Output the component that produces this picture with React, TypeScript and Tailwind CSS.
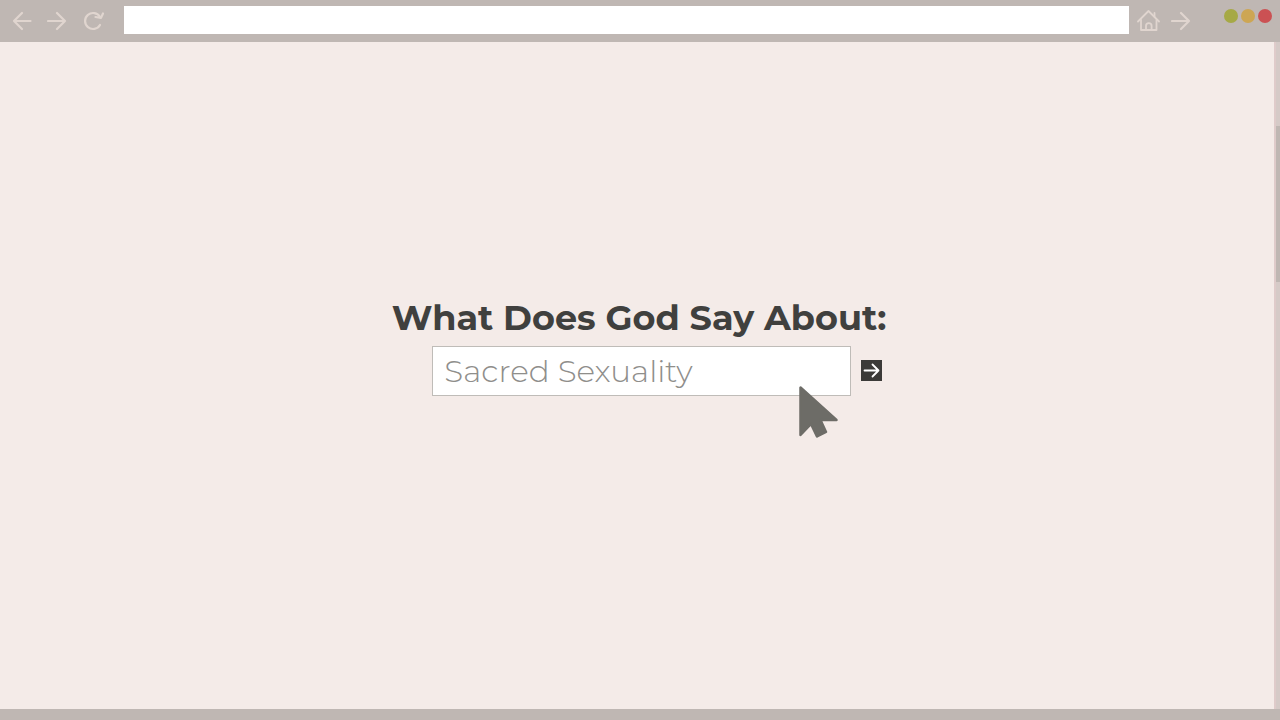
import type { FormEvent } from 'react';
import { useState } from 'react';

const iconProps = {
  fill: 'none',
  stroke: 'currentColor',
  strokeWidth: 2.2,
  strokeLinecap: 'round',
  strokeLinejoin: 'round',
  'aria-hidden': true,
} as const;

function ArrowIcon({ back = false }: { back?: boolean }) {
  return (
    <svg width="20" height="20" viewBox="0 0 20 20" {...iconProps}>
      {back ? <path d="M18.500 10H2M10 2L2 10l8 8" /> : <path d="M1 10h17M10 2l8 8-8 8" />}
    </svg>
  );
}

function ReloadIcon() {
  return (
    <svg width="22" height="20" viewBox="0 0 22 20" {...iconProps}>
      <path d="M18 14A8 8 0 1 1 18 6" />
      <path d="M13.500 6l5.500 0.800L21 2.500" />
    </svg>
  );
}

function HomeIcon() {
  return (
    <svg width="24" height="22" viewBox="0 0 24 22" {...iconProps} strokeWidth={1.8}>
      <path d="M1 11.500L11.500 1l10.500 10.500" />
      <path d="M4 10v10h15.500V10M17.500 6.500V3" />
      <path d="M9 20v-4a2.800 2.800 0 0 1 5.600 0v4" />
    </svg>
  );
}

function Pointer() {
  return (
    <svg
      width="42"
      height="54"
      viewBox="0 0 42 54"
      className="pointer-events-none absolute left-[366px] top-10 text-[#6d6c67]"
      aria-hidden="true"
    >
      <path
        d="M2.500 1.500v47.500l10.500-11 6 12.500 9-4.500-5.500-12h16z"
        fill="currentColor"
        stroke="currentColor"
        strokeWidth="2.500"
        strokeLinejoin="round"
      />
    </svg>
  );
}

function BrowserBar() {
  const [address, setAddress] = useState('');

  return (
    <header className="flex h-[42px] items-center bg-[#bfb7b3] pr-2 text-[#e0d5cf]">
      <nav aria-label="History" className="flex w-[124px] shrink-0 items-center gap-[15px] pl-3">
        <button type="button" aria-label="Back">
          <ArrowIcon back />
        </button>
        <button type="button" aria-label="Forward">
          <ArrowIcon />
        </button>
        <button type="button" aria-label="Reload">
          <ReloadIcon />
        </button>
      </nav>
      <input
        type="text"
        aria-label="Address"
        value={address}
        onChange={(e) => setAddress(e.target.value)}
        className="mb-0.5 h-7 min-w-0 flex-1 bg-white px-3 text-base text-[#40403e] outline-none"
      />
      <div className="flex items-center gap-2.5 pl-2">
        <button type="button" aria-label="Home">
          <HomeIcon />
        </button>
        <button type="button" aria-label="Go">
          <ArrowIcon />
        </button>
      </div>
      <div className="mb-2.5 ml-[33px] flex gap-[3px]">
        <button type="button" aria-label="Minimize" className="size-3.5 rounded-full bg-[#a6a945]" />
        <button type="button" aria-label="Maximize" className="size-3.5 rounded-full bg-[#cda653]" />
        <button type="button" aria-label="Close" className="size-3.5 rounded-full bg-[#cb5153]" />
      </div>
    </header>
  );
}

function TopicSearch() {
  const [topic, setTopic] = useState('Sacred Sexuality');

  const handleSubmit = (e: FormEvent) => e.preventDefault();

  return (
    <div className="flex flex-col items-end gap-2">
      <h1 className="whitespace-nowrap text-[35px] font-bold leading-10 text-[#40403e]">
        <label htmlFor="topic">What Does God Say About:</label>
      </h1>
      <form onSubmit={handleSubmit} className="relative flex items-center gap-2.5 pr-1">
        <input
          id="topic"
          type="text"
          value={topic}
          onChange={(e) => setTopic(e.target.value)}
          className="h-[50px] w-[419px] border border-[#bfbcb8] bg-white px-[11px] text-[31px] font-light text-[#8f8e8b] outline-none"
        />
        <button type="submit" aria-label="Search" className="flex size-[21px] items-center justify-center bg-[#3b3a38] text-white">
          <svg width="17" height="15" viewBox="0 0 17 15" {...iconProps} strokeWidth={1.8}>
            <path d="M1.500 7.500H15.500M9.500 1.500l6 6-6 6" />
          </svg>
        </button>
        <Pointer />
      </form>
    </div>
  );
}

export default function App() {
  return (
    <div className="flex min-h-screen flex-col bg-[#f4ebe8] font-[Montserrat,Inter,sans-serif]">
      <BrowserBar />
      <div className="flex flex-1">
        <main className="flex flex-1 items-center justify-center pb-[58px] pl-1">
          <TopicSearch />
        </main>
        <div className="w-1.5 border-l-2 border-[#dfcbca] bg-[#d5cac7] pt-[84px]">
          <div className="h-[156px] bg-[#bfb7b3]" />
        </div>
      </div>
      <footer className="h-[11px] bg-[#bfb7b3]" />
    </div>
  );
}
